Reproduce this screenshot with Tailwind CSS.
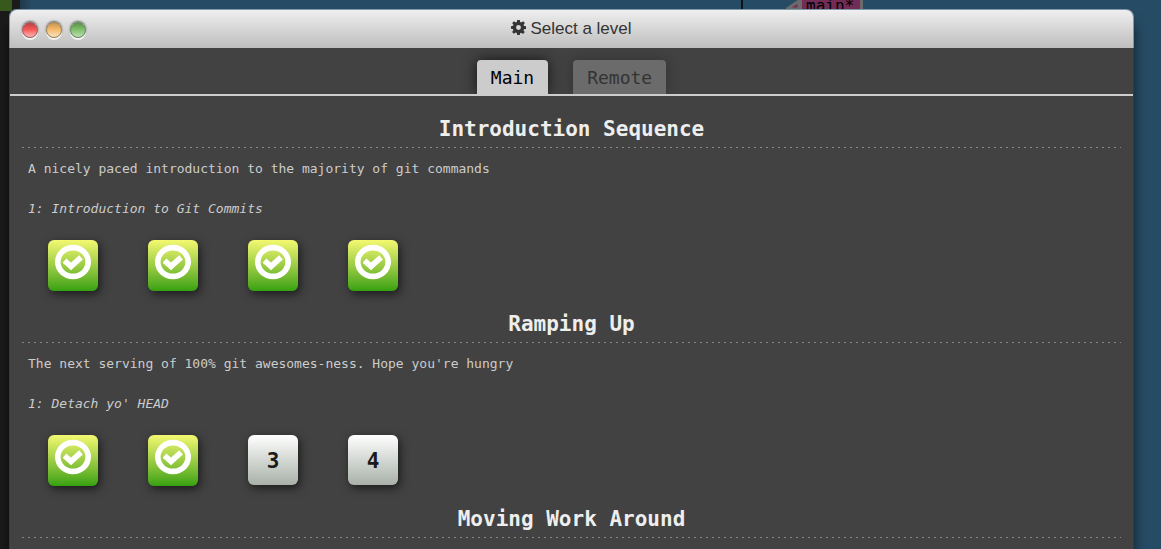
<!DOCTYPE html>
<html lang="en">
<head>
<meta charset="utf-8">
<meta name="viewport" content="width=device-width, initial-scale=1">
<title>Select a level</title>
<script src="https://cdn.jsdelivr.net/npm/@tailwindcss/browser@4"></script>
</head>
<body class="relative h-screen overflow-hidden bg-[#264b64] font-['DejaVu_Sans_Mono',monospace]">
<svg class="absolute" width="0" height="0" aria-hidden="true">
  <symbol id="check" viewBox="0 0 36 36">
    <ellipse cx="18" cy="18" rx="15.200" ry="14.400" fill="none" stroke="#fff" stroke-width="5.600"/>
    <path d="M9.500 16.600 L16 22.400 L26 13.400" fill="none" stroke="#fff" stroke-width="5.600"/>
  </symbol>
</svg>

<!-- terminal and commit tree behind the dialog -->
<div class="absolute inset-y-0 left-0 w-5 bg-[#1b1b1b]"></div>
<div class="absolute top-0 left-0 h-[11px] w-3 bg-[#37591c]"></div>
<div class="absolute top-0 left-5 h-[9px] w-3 bg-linear-to-r from-[#20394a] to-[#264b64]"></div>
<div class="absolute top-0 left-[741px] h-3 w-0.5 bg-[#0d1419]"></div>
<svg class="absolute top-0 left-[786px]" width="14" height="10" viewBox="0 0 14 10" aria-hidden="true"><path d="M1 9 L13 1 V9Z" fill="#722c56" stroke="#6b6b6b" stroke-width="3"/></svg>
<div class="absolute -top-1 left-[799px] h-5 w-16 border-x-3 border-[#6b6b6b] bg-[#722c56] pl-1 text-base leading-5 text-black">main*</div>

<main class="relative mt-[9px] mr-[27px] ml-[9px] h-full rounded-t-lg border-x border-[#3a3a3a] bg-[#424242] shadow-[0_14px_12px_rgba(0,0,0,0.6)]">
  <header class="relative -mx-px flex h-[39px] items-center justify-center rounded-t-lg border border-b-0 border-[#7d97ab] bg-linear-to-b from-[#efefef] to-[#bebebe] px-3">
    <div class="absolute left-3 flex gap-2 pt-0.5">
      <button type="button" aria-label="Close" class="size-4 rounded-full border border-[#a05c5c] bg-linear-to-b from-[#b84444] via-[#fb5a5a] to-[#f3b5b5] shadow-[0_2px_0_#f4f4f4,0_-1px_2px_#666]"></button>
      <button type="button" aria-label="Minimize" class="size-4 rounded-full border border-[#a07f50] bg-linear-to-b from-[#c79652] via-[#f6bd6e] to-[#f5e2c2] shadow-[0_2px_0_#f4f4f4,0_-1px_2px_#666]"></button>
      <button type="button" aria-label="Maximize" class="size-4 rounded-full border border-[#62895a] bg-linear-to-b from-[#5a9448] via-[#83c26d] to-[#c0dcb6] shadow-[0_2px_0_#f4f4f4,0_-1px_2px_#666]"></button>
    </div>
    <h1 class="flex items-center gap-1 pb-px text-[17px] leading-5 text-[#333] font-['Liberation_Sans',Arial,sans-serif]">
      <svg class="mb-0.5" width="15" height="15" viewBox="0 0 16 16" aria-hidden="true"><path fill="#333" fill-rule="evenodd" d="M6.6 0h2.8l.4 2.2 1.2.5L12.9 1.300l1.900 1.900-1.400 1.900.5 1.200 2.100.4v2.800l-2.200.4-.5 1.200 1.400 1.800-1.900 1.900-1.900-1.300-1.200.5L9.400 16H6.600l-.4-2.200-1.200-.5-1.900 1.300-1.900-1.900 1.300-1.900-.5-1.200L0 9.300V6.600l2.200-.4.4-1.200-1.300-1.900 1.900-1.900 1.800 1.400 1.200-.5zM8 5.400a2.600 2.600 0 1 0 0 5.200 2.600 2.600 0 0 0 0-5.200z"/></svg>
      Select a level
    </h1>
  </header>

  <nav class="flex h-12 items-end justify-center gap-[25px] overflow-hidden border-b-2 border-[#ccc] text-lg leading-6">
    <button type="button" class="h-[34px] rounded-t px-3.5 pt-0.5 bg-[#ccc] text-black shadow-[0_0_14px_rgba(0,0,0,0.7)]">Main</button>
    <button type="button" class="h-[34px] rounded-t px-3.5 pt-0.5 bg-[#6b6b6b] text-[#333] shadow-[0_0_14px_rgba(0,0,0,0.25)]">Remote</button>
  </nav>

  <div class="px-3 pt-3.5 text-[13px] leading-5 text-[#ccc]">
    <section class="h-[195px]">
      <h2 class="h-[37px] text-center text-[21px] leading-[38px] font-bold text-[#eee]">Introduction Sequence</h2>
      <div class="h-px bg-[repeating-linear-gradient(90deg,#888_0_2px,transparent_2px_6px)]"></div>
      <p class="mt-[11px] px-1.5">A nicely paced introduction to the majority of git commands</p>
      <p class="mt-5 px-1.5 italic">1: Introduction to Git Commits</p>
      <div class="mt-[21px] flex gap-[50px] px-[26px]">
        <button type="button" aria-label="Level 1, solved" class="flex h-[51px] w-[50px] justify-center rounded-md bg-linear-to-b from-[#f4f871] to-[#34a10f] pt-1 shadow-[2px_3px_10px_rgba(0,0,0,0.6)]"><svg class="size-9"><use href="#check"/></svg></button>
        <button type="button" aria-label="Level 2, solved" class="flex h-[51px] w-[50px] justify-center rounded-md bg-linear-to-b from-[#f4f871] to-[#34a10f] pt-1 shadow-[2px_3px_10px_rgba(0,0,0,0.6)]"><svg class="size-9"><use href="#check"/></svg></button>
        <button type="button" aria-label="Level 3, solved" class="flex h-[51px] w-[50px] justify-center rounded-md bg-linear-to-b from-[#f4f871] to-[#34a10f] pt-1 shadow-[2px_3px_10px_rgba(0,0,0,0.6)]"><svg class="size-9"><use href="#check"/></svg></button>
        <button type="button" aria-label="Level 4, solved" class="flex h-[51px] w-[50px] justify-center rounded-md bg-linear-to-b from-[#f4f871] to-[#34a10f] pt-1 shadow-[2px_3px_10px_rgba(0,0,0,0.6)]"><svg class="size-9"><use href="#check"/></svg></button>
      </div>
    </section>
    <section class="h-[195px]">
      <h2 class="h-[37px] text-center text-[21px] leading-[38px] font-bold text-[#eee]">Ramping Up</h2>
      <div class="h-px bg-[repeating-linear-gradient(90deg,#888_0_2px,transparent_2px_6px)]"></div>
      <p class="mt-[11px] px-1.5">The next serving of 100% git awesomes-ness. Hope you're hungry</p>
      <p class="mt-5 px-1.5 italic">1: Detach yo' HEAD</p>
      <div class="mt-[21px] flex gap-[50px] px-[26px]">
        <button type="button" aria-label="Level 1, solved" class="flex h-[51px] w-[50px] justify-center rounded-md bg-linear-to-b from-[#f4f871] to-[#34a10f] pt-1 shadow-[2px_3px_10px_rgba(0,0,0,0.6)]"><svg class="size-9"><use href="#check"/></svg></button>
        <button type="button" aria-label="Level 2, solved" class="flex h-[51px] w-[50px] justify-center rounded-md bg-linear-to-b from-[#f4f871] to-[#34a10f] pt-1 shadow-[2px_3px_10px_rgba(0,0,0,0.6)]"><svg class="size-9"><use href="#check"/></svg></button>
        <button type="button" class="size-[50px] rounded-md bg-linear-to-b from-white to-[#a9b1a9] pt-0.5 text-[21px] font-bold text-[#1a1a1a] shadow-[2px_3px_10px_rgba(0,0,0,0.6)]">3</button>
        <button type="button" class="size-[50px] rounded-md bg-linear-to-b from-white to-[#a9b1a9] pt-0.5 text-[21px] font-bold text-[#1a1a1a] shadow-[2px_3px_10px_rgba(0,0,0,0.6)]">4</button>
      </div>
    </section>
    <section>
      <h2 class="h-[37px] text-center text-[21px] leading-[38px] font-bold text-[#eee]">Moving Work Around</h2>
      <div class="h-px bg-[repeating-linear-gradient(90deg,#888_0_2px,transparent_2px_6px)]"></div>
    </section>
  </div>
</main>
</body>
</html>
